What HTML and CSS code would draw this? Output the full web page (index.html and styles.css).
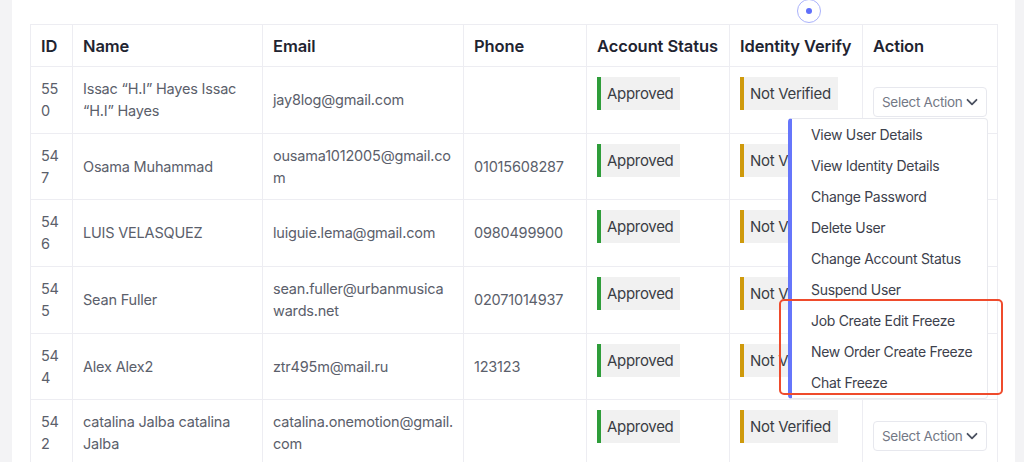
FILE: index.html
```html
<html>
<head>
	<title>Users</title>
	<link rel="stylesheet" href="styles.css">
	<meta name="viewport" content="width=device-width, initial-scale=1.0">
</head>
<body>
	<div class="panel">
		<span class="pulse"><span class="pulseDot"></span></span>
		<table class="users">
			<colgroup>
				<col style="width:42px">
				<col style="width:190px">
				<col style="width:201px">
				<col style="width:123px">
				<col style="width:143px">
				<col style="width:133px">
				<col style="width:135px">
			</colgroup>
			<thead>
			<tr>
				<th>ID</th>
				<th>Name</th>
				<th>Email</th>
				<th>Phone</th>
				<th>Account Status</th>
				<th>Identity Verify</th>
				<th>Action</th>
			</tr>
			</thead>
			<tbody>
			<tr>
				<td class="id">550</td>
				<td>Issac “H.I” Hayes Issac “H.I” Hayes</td>
				<td class="mail">jay8log@gmail.com</td>
				<td></td>
				<td class="stat"><span class="badge ok">Approved</span></td>
				<td class="stat"><span class="badge warn">Not Verified</span></td>
				<td class="act">
					<div class="select">Select Action
						<svg width="14" height="14" viewBox="0 0 14 14"><path d="M2.5 4.8 7 9.3l4.5-4.5" fill="none" stroke="#4b5160" stroke-width="1.8" stroke-linecap="round" stroke-linejoin="round"/></svg>
					</div>
					<ul class="menu">
						<li>View User Details</li>
						<li>View Identity Details</li>
						<li>Change Password</li>
						<li>Delete User</li>
						<li>Change Account Status</li>
						<li>Suspend User</li>
						<li>Job Create Edit Freeze</li>
						<li>New Order Create Freeze</li>
						<li>Chat Freeze</li>
					</ul>
					<div class="mark"></div>
				</td>
			</tr>
			<tr>
				<td class="id">547</td>
				<td>Osama Muhammad</td>
				<td class="mail">ousama1012005@gmail.com</td>
				<td>01015608287</td>
				<td class="stat"><span class="badge ok">Approved</span></td>
				<td class="stat"><span class="badge warn">Not Verified</span></td>
				<td class="act"></td>
			</tr>
			<tr>
				<td class="id">546</td>
				<td>LUIS VELASQUEZ</td>
				<td class="mail">luiguie.lema@gmail.com</td>
				<td>0980499900</td>
				<td class="stat"><span class="badge ok">Approved</span></td>
				<td class="stat"><span class="badge warn">Not Verified</span></td>
				<td class="act"></td>
			</tr>
			<tr>
				<td class="id">545</td>
				<td>Sean Fuller</td>
				<td class="mail">sean.fuller@urbanmusicawards.net</td>
				<td>02071014937</td>
				<td class="stat"><span class="badge ok">Approved</span></td>
				<td class="stat"><span class="badge warn">Not Verified</span></td>
				<td class="act"></td>
			</tr>
			<tr>
				<td class="id">544</td>
				<td>Alex Alex2</td>
				<td class="mail">ztr495m@mail.ru</td>
				<td>123123</td>
				<td class="stat"><span class="badge ok">Approved</span></td>
				<td class="stat"><span class="badge warn">Not Verified</span></td>
				<td class="act"></td>
			</tr>
			<tr>
				<td class="id">542</td>
				<td>catalina Jalba catalina Jalba</td>
				<td class="mail">catalina.onemotion@gmail.com</td>
				<td></td>
				<td class="stat"><span class="badge ok">Approved</span></td>
				<td class="stat"><span class="badge warn">Not Verified</span></td>
				<td class="act">
					<div class="select">Select Action
						<svg width="14" height="14" viewBox="0 0 14 14"><path d="M2.5 4.8 7 9.3l4.5-4.5" fill="none" stroke="#4b5160" stroke-width="1.8" stroke-linecap="round" stroke-linejoin="round"/></svg>
					</div>
				</td>
			</tr>
			</tbody>
		</table>
	</div>
</body>
</html>
```

FILE: styles.css
```css
	body {
		margin: 0;
		background-color: #f3f3f5;
		font-family: Inter, "Noto Sans", sans-serif;
		color: #5b606b;
		overflow: hidden;
	}

	.panel {
		position: relative;
		background-color: white;
		margin: 0 9px 0 12px;
		padding: 24px 18px 0 18px;
		height: 438px;
	}

	/* little ring above the identity column */
	.pulse {
		position: absolute;
		left: 785px;
		top: -1px;
		width: 22px;
		height: 22px;
		border: 1.5px solid #aab2fb;
		border-radius: 50%;
		display: flex;
		align-items: center;
		justify-content: center;
	}

	.pulseDot {
		width: 6px;
		height: 6px;
		border-radius: 50%;
		background-color: #5f6ffa;
	}

	table.users {
		width: 967px;
		table-layout: fixed;
		border-collapse: collapse;
	}

	.users th, .users td {
		border: 1px solid #ededf2;
		padding: 0 10px;
		text-align: left;
	}

	.users th {
		height: 42px;
		font-size: 16.5px;
		font-weight: 600;
		color: #1f2431;
		letter-spacing: -0.1px;
	}

	.users td {
		height: 66.7px;
		font-size: 14.5px;
		line-height: 22px;
		letter-spacing: -0.2px;
		vertical-align: middle;
	}

	.users td.id, .users td.mail {
		word-break: break-all;
	}

	.users td.stat {
		vertical-align: top;
		padding-top: 10px;
	}

	.badge {
		display: inline-block;
		height: 33px;
		line-height: 33px;
		padding: 0 7px 0 6px;
		background-color: #f1f1f1;
		color: #3a3d44;
		font-size: 15px;
		letter-spacing: -0.3px;
	}

	.badge.ok {
		border-left: 4px solid #2e9d3a;
	}

	.badge.warn {
		border-left: 4px solid #cf9a0c;
	}

	.users td.act {
		position: relative;
	}

	.select {
		display: flex;
		align-items: center;
		justify-content: space-between;
		box-sizing: border-box;
		width: 114px;
		height: 30px;
		margin-top: 5px;
		padding: 0 7px 0 8px;
		border: 1px solid #e7e8ee;
		border-radius: 4px;
		font-size: 13.5px;
		letter-spacing: -0.3px;
		white-space: nowrap;
		color: #737885;
	}

	.menu {
		position: absolute;
		left: -75px;
		top: 51px;
		z-index: 2;
		width: 200px;
		box-sizing: border-box;
		margin: 0;
		padding: 0;
		list-style: none;
		background-color: white;
		border: 1px solid #e8e9ee;
		border-left: 4px solid #6676fb;
		border-radius: 4px;
	}

	.menu li {
		height: 31px;
		line-height: 31px;
		padding-left: 19px;
		font-size: 14px;
		letter-spacing: -0.3px;
		color: #3d414c;
		white-space: nowrap;
	}

	/* outline round the freeze entries */
	.mark {
		position: absolute;
		left: -84px;
		top: 232px;
		z-index: 3;
		width: 224px;
		height: 96px;
		box-sizing: border-box;
		border: 2px solid #ef4b2c;
		border-radius: 5px;
	}
```
